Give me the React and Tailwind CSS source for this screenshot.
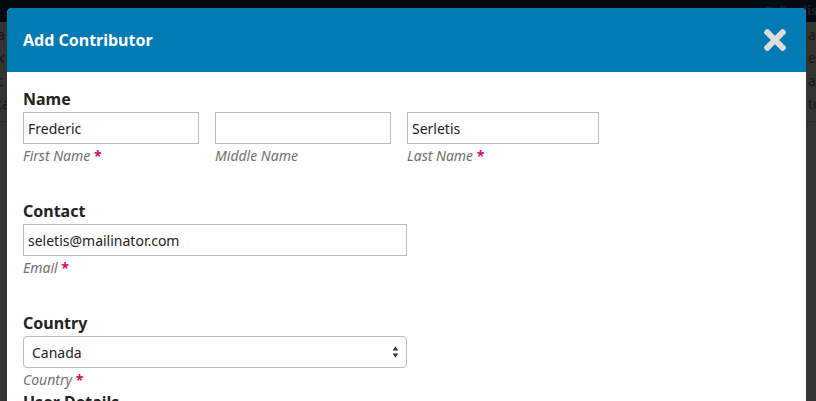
import { FaTimes } from "react-icons/fa";

const font = { fontFamily: '"Noto Sans", "Open Sans", sans-serif' };

function Required() {
  return <span className="not-italic font-bold text-[#d00a6c]"> *</span>;
}

function SubLabel({ children, required }) {
  return (
    <div className="text-[14px] leading-[22px] italic text-[#707070] pt-[1px]">
      {children}
      {required && <Required />}
    </div>
  );
}

function TextField({ value, width, label, required }) {
  return (
    <div className={width}>
      <input
        readOnly
        value={value}
        className="block w-full h-[32px] border border-[#bbb] px-[4px] text-[14px] text-[#222] outline-none"
      />
      <SubLabel required={required}>{label}</SubLabel>
    </div>
  );
}

function Section({ title, children, spaced = true }) {
  return (
    <fieldset className={spaced ? "mb-[33px]" : ""}>
      <legend className="text-[16px] leading-[22px] font-bold text-[#222] mb-[2px]">{title}</legend>
      {children}
    </fieldset>
  );
}

function BackgroundPage() {
  const rows = [
    ["a", "a"],
    ["k", "e"],
    ["c", "a"],
    ["ta", "to"],
  ];
  return (
    <div className="min-h-[401px] bg-[#333] text-[#161616] text-[14px]" style={font}>
      <div className="h-[22px] bg-[#02090f] flex justify-end items-center text-[#1c2228] font-bold text-[13px]">
        <span className="mr-[4px]">◉</span>
        <span className="-mr-[10px]">English</span>
      </div>
      <div className="flex justify-between">
        <div className="-ml-[3px] leading-[23px] pt-[1px]">
          {rows.map((r, i) => (
            <div key={i}>{r[0]}</div>
          ))}
        </div>
        <div className="leading-[23px] pt-[1px] w-[8px] overflow-hidden">
          {rows.map((r, i) => (
            <div key={i}>{r[1]}</div>
          ))}
        </div>
      </div>
      <div className="mt-[6px] border-t border-[#2a2a2a]" />
    </div>
  );
}

export default function App() {
  return (
    <div className="relative w-[816px] h-[401px] overflow-hidden" style={font}>
      <BackgroundPage />

      <div className="absolute left-[7px] top-[8px] w-[799px] h-[420px] bg-white rounded-t-[5px] overflow-hidden">
        <div className="h-[64px] bg-[#007ab2] flex items-center justify-between pl-[16px] pr-[15px]">
          <h2 className="text-[16px] leading-[22px] font-bold text-white">Add Contributor</h2>
          <FaTimes size={32} className="text-[#dddddd]" />
        </div>

        <div className="px-[16px] pt-[16px]">
          <Section title="Name">
            <div className="flex gap-[16px]">
              <TextField value="Frederic" width="w-[176px]" label="First Name" required />
              <TextField value="" width="w-[176px]" label="Middle Name" />
              <TextField value="Serletis" width="w-[192px]" label="Last Name" required />
            </div>
          </Section>

          <Section title="Contact">
            <TextField value="seletis@mailinator.com" width="w-[384px]" label="Email" required />
          </Section>

          <Section title="Country" spaced={false}>
            <div className="w-[384px]">
              <div className="relative">
                <select
                  defaultValue="Canada"
                  className="block w-full h-[32px] appearance-none rounded-[4px] border border-[#bbb] pl-[8px] text-[14px] text-[#222] bg-white outline-none"
                >
                  <option>Canada</option>
                </select>
                <svg
                  className="absolute right-[8px] top-[10px]"
                  width="7"
                  height="12"
                  viewBox="0 0 7 12"
                >
                  <path d="M3.5 0.5 L6.5 4.5 L0.5 4.5 Z" fill="#333" />
                  <path d="M3.5 11.5 L6.5 7.5 L0.5 7.5 Z" fill="#333" />
                </svg>
              </div>
              <SubLabel required>Country</SubLabel>
            </div>
          </Section>

          <Section title="User Details" spaced={false}>
            <div className="h-[40px]" />
          </Section>
        </div>
      </div>
    </div>
  );
}
